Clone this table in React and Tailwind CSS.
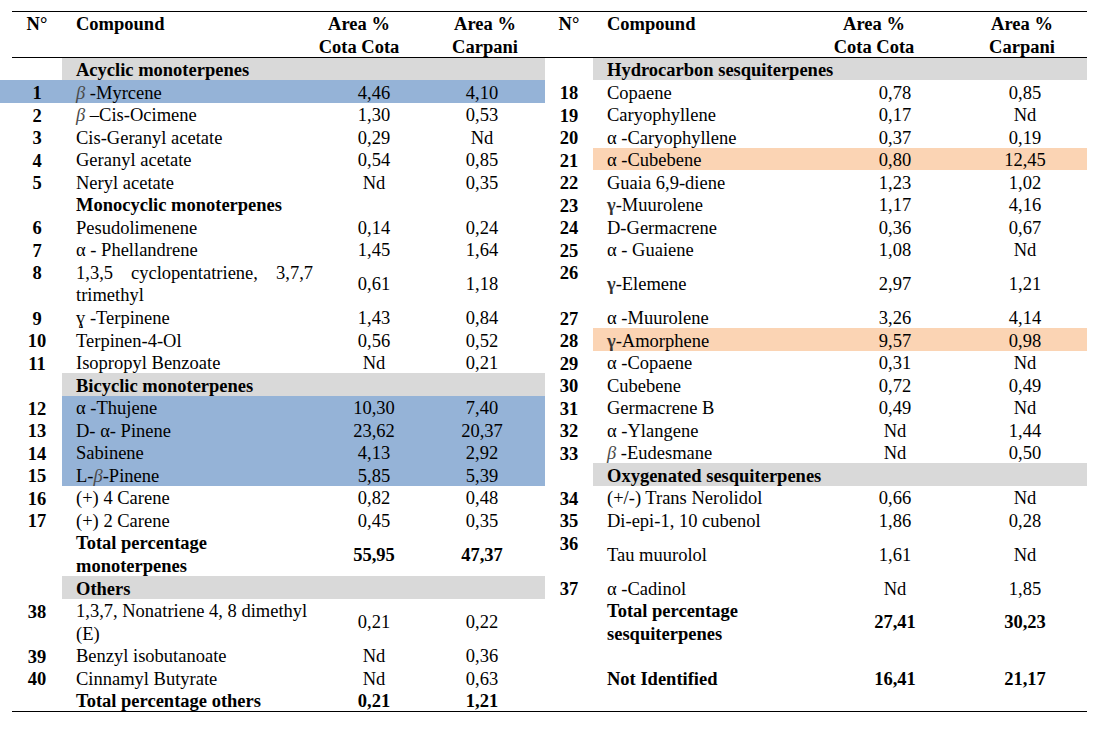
const GRAY = "bg-[#d9d9d9]";
const BLUE = "bg-[#95b3d7]";
const PEACH = "bg-[#fbd4b4]";

const HEIGHTS = {
  1: "h-[22.55px]",
  2: "h-[45.1px]",
  3: "h-[67.65px]",
};

const SIDES = {
  left: {
    width: "w-[533px]",
    hNum: "w-[50px]",
    hComp: "w-[247px] pl-[14px]",
    h3: "w-[100px]",
    h4: "w-[136px] pl-[16px]",
    num: "w-[50px]",
    comp: "w-[258px] pl-[14px]",
    c3: "w-[108px]",
    c4: "w-[117px] pr-[9px]",
  },
  right: {
    width: "w-[542px]",
    hNum: "w-[48px]",
    hComp: "w-[231px] pl-[14px]",
    h3: "w-[100px]",
    h4: "w-[163px] pl-[33px]",
    num: "w-[48px]",
    comp: "w-[247px] pl-[14px]",
    c3: "w-[110px]",
    c4: "w-[137px] pl-[13px]",
  },
};

const Beta = () => <span className="italic text-[#4a4a4a]">β</span>;
const Gam = () => <span className="font-bold text-[#333]">γ</span>;

const LEFT = [
  { section: "Acyclic monoterpenes", bg: GRAY },
  { n: "1", name: <><Beta /> -Myrcene</>, a: "4,46", b: "4,10", bg: BLUE, full: true },
  { n: "2", name: <><Beta /> –Cis-Ocimene</>, a: "1,30", b: "0,53" },
  { n: "3", name: "Cis-Geranyl acetate", a: "0,29", b: "Nd" },
  { n: "4", name: "Geranyl acetate", a: "0,54", b: "0,85" },
  { n: "5", name: "Neryl acetate", a: "Nd", b: "0,35" },
  { section: "Monocyclic monoterpenes" },
  { n: "6", name: "Pesudolimenene", a: "0,14", b: "0,24" },
  { n: "7", name: "α - Phellandrene", a: "1,45", b: "1,64" },
  {
    n: "8",
    span: 2,
    name: (
      <>
        <span className="flex w-[237px] justify-between">
          <span>1,3,5</span>
          <span>cyclopentatriene,</span>
          <span>3,7,7</span>
        </span>
        <span className="block">trimethyl</span>
      </>
    ),
    a: "0,61",
    b: "1,18",
  },
  { n: "9", name: "ɣ -Terpinene", a: "1,43", b: "0,84" },
  { n: "10", name: "Terpinen-4-Ol", a: "0,56", b: "0,52" },
  { n: "11", name: "Isopropyl Benzoate", a: "Nd", b: "0,21" },
  { section: "Bicyclic monoterpenes", bg: GRAY },
  { n: "12", name: "α -Thujene", a: "10,30", b: "7,40", bg: BLUE },
  { n: "13", name: "D- α- Pinene", a: "23,62", b: "20,37", bg: BLUE },
  { n: "14", name: "Sabinene", a: "4,13", b: "2,92", bg: BLUE },
  { n: "15", name: <>L-<Beta />-Pinene</>, a: "5,85", b: "5,39", bg: BLUE },
  { n: "16", name: "(+) 4 Carene", a: "0,82", b: "0,48" },
  { n: "17", name: "(+) 2 Carene", a: "0,45", b: "0,35" },
  {
    span: 2,
    bold: true,
    name: (
      <>
        <span className="block">Total percentage</span>
        <span className="block">monoterpenes</span>
      </>
    ),
    a: "55,95",
    b: "47,37",
  },
  { section: "Others", bg: GRAY },
  {
    n: "38",
    span: 2,
    name: (
      <>
        <span className="block">1,3,7, Nonatriene 4, 8 dimethyl</span>
        <span className="block">(E)</span>
      </>
    ),
    a: "0,21",
    b: "0,22",
  },
  { n: "39", name: "Benzyl isobutanoate", a: "Nd", b: "0,36" },
  { n: "40", name: "Cinnamyl Butyrate", a: "Nd", b: "0,63" },
  { bold: true, name: "Total percentage others", a: "0,21", b: "1,21" },
];

const RIGHT = [
  { section: "Hydrocarbon sesquiterpenes", bg: GRAY },
  { n: "18", name: "Copaene", a: "0,78", b: "0,85" },
  { n: "19", name: "Caryophyllene", a: "0,17", b: "Nd" },
  { n: "20", name: "α -Caryophyllene", a: "0,37", b: "0,19" },
  { n: "21", name: "α -Cubebene", a: "0,80", b: "12,45", bg: PEACH },
  { n: "22", name: "Guaia 6,9-diene", a: "1,23", b: "1,02" },
  { n: "23", name: <><Gam />-Muurolene</>, a: "1,17", b: "4,16" },
  { n: "24", name: "D-Germacrene", a: "0,36", b: "0,67" },
  { n: "25", name: "α - Guaiene", a: "1,08", b: "Nd" },
  { n: "26", span: 2, name: <><Gam />-Elemene</>, a: "2,97", b: "1,21" },
  { n: "27", name: "α -Muurolene", a: "3,26", b: "4,14" },
  { n: "28", name: <><Gam />-Amorphene</>, a: "9,57", b: "0,98", bg: PEACH },
  { n: "29", name: "α -Copaene", a: "0,31", b: "Nd" },
  { n: "30", name: "Cubebene", a: "0,72", b: "0,49" },
  { n: "31", name: "Germacrene B", a: "0,49", b: "Nd" },
  { n: "32", name: "α -Ylangene", a: "Nd", b: "1,44" },
  { n: "33", name: <><Beta /> -Eudesmane</>, a: "Nd", b: "0,50" },
  { section: "Oxygenated sesquiterpenes", bg: GRAY },
  { n: "34", name: "(+/-) Trans Nerolidol", a: "0,66", b: "Nd" },
  { n: "35", name: "Di-epi-1, 10 cubenol", a: "1,86", b: "0,28" },
  { n: "36", span: 2, name: "Tau muurolol", a: "1,61", b: "Nd" },
  { n: "37", name: "α -Cadinol", a: "Nd", b: "1,85" },
  {
    span: 2,
    bold: true,
    name: (
      <>
        <span className="block">Total percentage</span>
        <span className="block">sesquiterpenes</span>
      </>
    ),
    a: "27,41",
    b: "30,23",
  },
  { span: 3, bold: true, name: "Not Identified", a: "16,41", b: "21,17" },
];

function Row({ row, s }) {
  const h = HEIGHTS[row.span || 1];
  if (row.section) {
    return (
      <div className={`flex ${h}`}>
        <div className={s.num} />
        <div className={`flex-1 flex items-center pt-[3px] font-bold ${row.bg || ""}`}>
          <span className={s.comp}>{row.section}</span>
        </div>
      </div>
    );
  }
  return (
    <div className={`flex ${h} ${row.full ? `${row.bg} -ml-[12px] pl-[12px]` : ""}`}>
      <div className={`${s.num} pt-[2px] text-center font-bold`}>{row.n}</div>
      <div className={`flex-1 flex items-center pt-[3px] ${!row.full && row.bg ? row.bg : ""} ${row.bold ? "font-bold" : ""}`}>
        <div className={s.comp}>{row.name}</div>
        <div className={`${s.c3} text-center`}>{row.a}</div>
        <div className={`${s.c4} text-center`}>{row.b}</div>
      </div>
    </div>
  );
}

function Table({ rows, side }) {
  const s = SIDES[side];
  return (
    <div className={`${s.width} border-t border-b border-black`}>
      <div className="flex h-[45.5px] pt-[1px] border-b border-black font-bold">
        <div className={`${s.hNum} text-center`}>N°</div>
        <div className={s.hComp}>Compound</div>
        <div className={`${s.h3} flex flex-col items-center whitespace-nowrap`}>
          <span>Area %</span>
          <span>Cota Cota</span>
        </div>
        <div className={`${s.h4} flex flex-col items-center whitespace-nowrap`}>
          <span>Area %</span>
          <span>Carpani</span>
        </div>
      </div>
      {rows.map((r, i) => (
        <Row key={i} row={r} s={s} />
      ))}
    </div>
  );
}

export default function App() {
  return (
    <div className="w-[1099px] h-[732px] bg-white text-black font-['Liberation_Serif',serif] text-[18.5px] leading-[22.55px] pl-[12px] pt-[11px] overflow-hidden">
      <div className="flex">
        <Table rows={LEFT} side="left" />
        <Table rows={RIGHT} side="right" />
      </div>
    </div>
  );
}
